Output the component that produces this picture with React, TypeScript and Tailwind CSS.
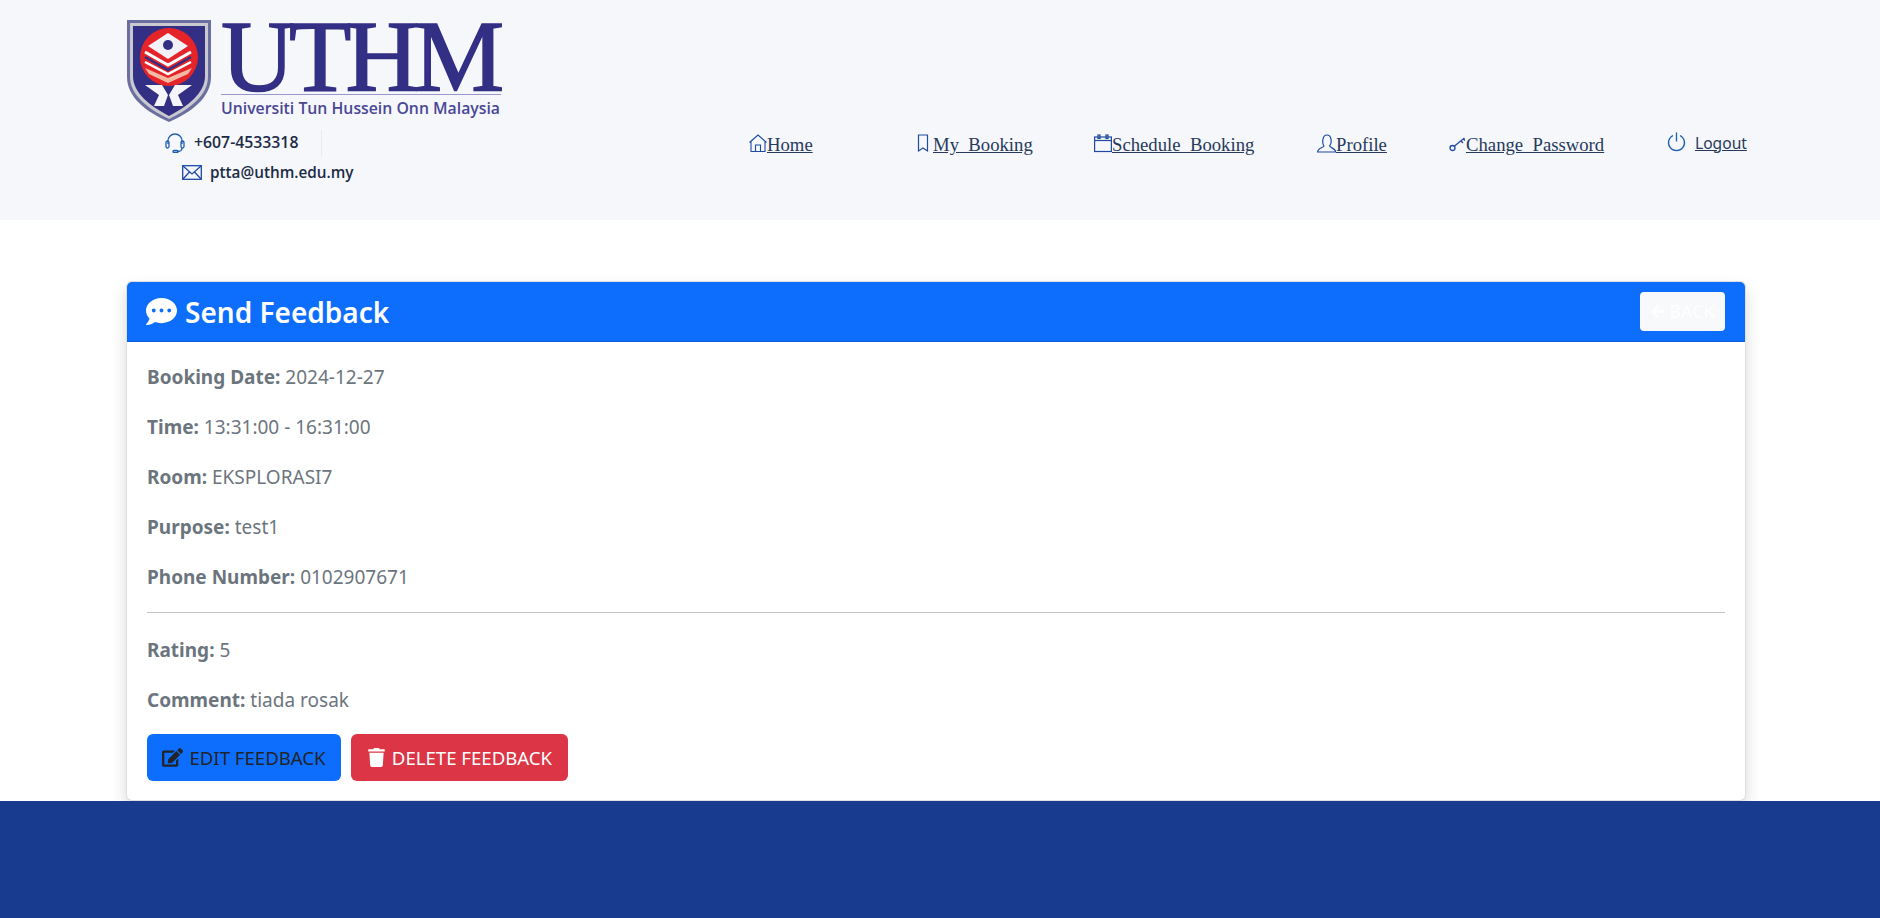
import React from "react";
import { FaArrowLeft, FaCommentDots, FaEdit, FaTrash } from "react-icons/fa";

const navIcon = "shrink-0 text-[#1f4aa0] mb-[2px]";

function Shield() {
  return (
    <svg width="86" height="104" viewBox="0 0 86 104" className="shrink-0">
      <path d="M1 1H85V58C85 78 66 93 43 103C20 93 1 78 1 58Z" fill="#6b6fa0" />
      <path d="M4 4H82V58C82 76 64 90 43 100C22 90 4 76 4 58Z" fill="#c9c9cf" />
      <path d="M7 7H79V57C79 74 62 87 43 97C24 87 7 74 7 57Z" fill="#322f85" />
      <circle cx="43" cy="38" r="29" fill="#e5242a" />
      <path d="M42 14L62 27L42 40L22 27Z" fill="#f2f2f7" />
      <circle cx="42" cy="26" r="5" fill="#322f85" />
      <path d="M19 33L42 46L65 33" stroke="#fff" strokeWidth="3" fill="none" />
      <path d="M19 38L42 51L65 38" stroke="#322f85" strokeWidth="2.500" fill="none" />
      <path d="M19 43L42 55L65 43" stroke="#fff" strokeWidth="2.500" fill="none" />
      <path d="M19 49L42 59L66 49L62 55L42 64L23 55Z" fill="#f4b9a2" />
      <path d="M19 66H36L42 76L38 87H28L33 76ZM66 66H49L43 76L47 87H57L52 76Z" fill="#f4f4fa" />
    </svg>
  );
}

function Logo() {
  return (
    <div className="flex items-start gap-[9px] h-[104px]">
      <Shield />
      <div className="w-[280px] shrink-0">
        <div className="h-[75px] text-[#322f85] text-[102px] leading-[75px] tracking-[-5.700px] font-['Liberation_Serif',serif] [-webkit-text-stroke:1.500px_#322f85] whitespace-nowrap">
          UTHM
        </div>
        <div className="h-[1px] bg-[#9a98c8]" />
        <div className="mt-[3px] text-[15.800px] leading-[20px] text-[#4a4894] font-semibold whitespace-nowrap font-['Open_Sans',sans-serif]">
          Universiti Tun Hussein Onn Malaysia
        </div>
      </div>
    </div>
  );
}

function Item({ w, icon, label }: { w: string; icon: React.ReactNode; label: string }) {
  return (
    <div className={`flex items-end ${w}`}>
      {icon}
      <a className="text-[18.720px] leading-[20px] text-[#273a5c] underline font-['Liberation_Serif',serif] whitespace-pre">{label}</a>
    </div>
  );
}

export default function App() {
  return (
    <div className="min-h-[918px] flex flex-col bg-white font-['Open_Sans',sans-serif]">
      <header className="h-[220px] bg-[#f5f7fb] pl-[126px] flex">
        <div className="w-[623px] shrink-0 pt-[19px]">
          <Logo />
          <div className="mt-[7px] ml-[39px] flex items-center gap-[9px] h-[26px]">
            <svg width="20" height="20" viewBox="0 0 20 20" fill="none" stroke="#1f5fb0" strokeWidth="1.300">
              <path d="M3 11V8a7 7 0 0 1 14 0v3" />
              <rect x="1" y="8" width="3" height="7" rx="1.500" />
              <rect x="16" y="8" width="3" height="7" rx="1.500" />
              <path d="M17 15c0 3-3 3.500-5 3.500" />
              <rect x="8" y="17.500" width="5" height="2" rx="1" />
            </svg>
            <span className="text-[15.800px] font-semibold text-[#1c2b45]">+607-4533318</span>
            <span className="ml-[14px] w-[1px] h-[26px] bg-[#e8eaee]" />
          </div>
          <div className="mt-[4px] ml-[56px] flex items-center gap-[8px] h-[24px]">
            <svg width="20" height="15" viewBox="0 0 20 15" fill="none" stroke="#1f4aa0" strokeWidth="1.300">
              <rect x="0.700" y="0.700" width="18.600" height="13.600" />
              <path d="M1 1L10 9L19 1M1 14L7.500 7M19 14L12.500 7" />
            </svg>
            <span className="text-[15.300px] font-semibold text-[#1c2b45]">ptta@uthm.edu.my</span>
          </div>
        </div>
        <nav className="flex items-start pt-[134px] h-[220px]">
          <Item
            w="w-[168px]"
            label="Home"
            icon={
              <svg width="18" height="19" viewBox="0 0 18 19" fill="none" stroke="currentColor" strokeWidth="1.100" className={navIcon}>
                <path d="M0.500 8.500L9 1L17.500 8.500M2 7.500V17.500H16V7.500M6.500 17.500V11H11.500V17.500" />
              </svg>
            }
          />
          <Item
            w="w-[177px]"
            label="My  Booking"
            icon={
              <svg width="16" height="19" viewBox="0 0 16 19" fill="none" stroke="currentColor" strokeWidth="1.200" className={navIcon}>
                <path d="M1.500 1H10.500V17L6 14L1.500 17Z" />
              </svg>
            }
          />
          <Item
            w="w-[223px]"
            label="Schedule  Booking"
            icon={
              <svg width="18" height="19" viewBox="0 0 18 19" fill="none" stroke="currentColor" strokeWidth="1.200" className={navIcon}>
                <rect x="0.600" y="3" width="16.800" height="14.500" />
                <path d="M0.600 6.500H17.400" />
                <rect x="4" y="1" width="2" height="3.500" />
                <rect x="12" y="1" width="2" height="3.500" />
              </svg>
            }
          />
          <Item
            w="w-[132px]"
            label="Profile"
            icon={
              <svg width="19" height="19" viewBox="0 0 19 19" fill="none" stroke="currentColor" strokeWidth="1.200" className={navIcon}>
                <path d="M0.600 18C0.600 14 5.500 14 7 12C5 9.500 5 1 10 1C15 1 15 9.500 12.500 12C14 14 18 14.500 19 18Z" />
              </svg>
            }
          />
          <Item
            w="w-[218px]"
            label="Change  Password"
            icon={
              <svg width="17" height="19" viewBox="0 0 17 19" fill="none" stroke="currentColor" strokeWidth="1.300" className={navIcon}>
                <circle cx="3.500" cy="14" r="2.500" />
                <path d="M5.500 12L15.500 4M12 7L14 9M14.500 5L16 6.500" />
              </svg>
            }
          />
          <div className="flex items-center gap-[9px] h-[20px] mt-[-2px]">
            <svg width="19" height="20" viewBox="0 0 19 20" fill="none" stroke="#1f5fb0" strokeWidth="1.300" className="shrink-0">
              <path d="M6 3.500A8 8 0 1 0 13 3.500M9.500 0.500V9.500" />
            </svg>
            <a className="pt-[3px] text-[15.600px] text-[#273a5c] underline whitespace-nowrap font-['Noto_Sans',sans-serif]">Logout</a>
          </div>
        </nav>
      </header>

      <main className="pl-[126px] pr-[134px] pt-[61px] flex-none bg-white">
        <section className="h-[520px] rounded-[6px] border border-[#00000020] bg-white shadow-[0_8px_16px_rgba(0,0,0,0.15)] overflow-hidden">
          <div className="h-[60px] bg-[#0d6efd] border-b border-[#0b5ed7] flex items-center justify-between pl-[19px] pr-[20px]">
            <h2 className="flex items-center gap-[8px] text-white text-[28px] font-semibold font-['Noto_Sans',sans-serif]">
              <FaCommentDots className="text-[31px]" />
              Send Feedback
            </h2>
            <button className="w-[85px] h-[39px] rounded-[4px] bg-[#f8f9fa] text-white text-[18px] flex items-center justify-center gap-[4px] font-['Noto_Sans',sans-serif]">
              <FaArrowLeft className="text-[15px]" />
              BACK
            </button>
          </div>
          <div className="px-[20px] pt-[21px] text-[19px] leading-[28px] text-[#6c757d] font-['Noto_Sans',sans-serif]">
            {[
              ["Booking Date:", "2024-12-27"],
              ["Time:", "13:31:00 - 16:31:00"],
              ["Room:", "EKSPLORASI7"],
              ["Purpose:", "test1"],
              ["Phone Number:", "0102907671"],
            ].map(([k, v]) => (
              <p key={k} className="mb-[22px]">
                <b className="font-bold">{k}</b> {v}
              </p>
            ))}
            <hr className="border-[#c4c4c4] mt-[-1px] mb-[23px]" />
            {[
              ["Rating:", "5"],
              ["Comment:", "tiada rosak"],
            ].map(([k, v]) => (
              <p key={k} className="mb-[22px]">
                <b className="font-bold">{k}</b> {v}
              </p>
            ))}
            <div className="flex gap-[10px] mt-[-2px] text-[18.600px]">
              <button className="h-[47px] w-[194px] rounded-[6px] bg-[#0d6efd] text-[#212529] flex items-center justify-center gap-[6px]">
                <FaEdit className="text-[21px]" />
                EDIT FEEDBACK
              </button>
              <button className="h-[47px] w-[217px] rounded-[6px] bg-[#dc3545] text-white flex items-center justify-center gap-[6px]">
                <FaTrash className="text-[19px]" />
                DELETE FEEDBACK
              </button>
            </div>
          </div>
        </section>
      </main>
      <footer className="h-[117px] bg-[#183b8f]" />
    </div>
  );
}
